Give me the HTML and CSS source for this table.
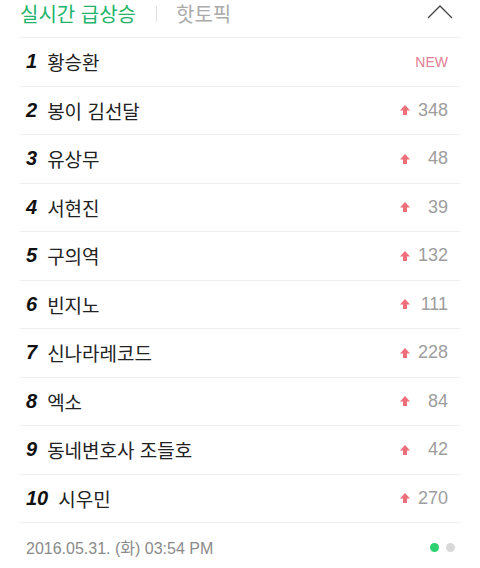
FILE: index.html
```html
<!DOCTYPE html>
<html lang="ko">
<head>
<meta charset="utf-8">
<link rel="stylesheet" href="styles.css">
</head>
<body>
<div class="panel">
  <div class="header">
    <span class="tab tab-on">실시간 급상승</span>
    <span class="sep"></span>
    <span class="tab tab-off">핫토픽</span>
    <svg class="chev" width="26" height="16" viewBox="0 0 26 16"><path d="M1 15 L13 3 L25 15" fill="none" stroke="#444" stroke-width="1.3"/></svg>
  </div>
  <ul class="list">
    <li class="row"><span class="rank">1</span><span class="name">황승환</span><span class="new">NEW</span></li>
    <li class="row"><span class="rank">2</span><span class="name">봉이 김선달</span><span class="up"><svg class="arrow" width="10" height="10" viewBox="0 0 10 10"><path d="M5 0 L10 5.5 L7 5.5 L7 10 L3 10 L3 5.5 L0 5.5 Z" fill="#ee6f7a"/></svg><span class="num">348</span></span></li>
    <li class="row"><span class="rank">3</span><span class="name">유상무</span><span class="up"><svg class="arrow" width="10" height="10" viewBox="0 0 10 10"><path d="M5 0 L10 5.5 L7 5.5 L7 10 L3 10 L3 5.5 L0 5.5 Z" fill="#ee6f7a"/></svg><span class="num">48</span></span></li>
    <li class="row"><span class="rank">4</span><span class="name">서현진</span><span class="up"><svg class="arrow" width="10" height="10" viewBox="0 0 10 10"><path d="M5 0 L10 5.5 L7 5.5 L7 10 L3 10 L3 5.5 L0 5.5 Z" fill="#ee6f7a"/></svg><span class="num">39</span></span></li>
    <li class="row"><span class="rank">5</span><span class="name">구의역</span><span class="up"><svg class="arrow" width="10" height="10" viewBox="0 0 10 10"><path d="M5 0 L10 5.5 L7 5.5 L7 10 L3 10 L3 5.5 L0 5.5 Z" fill="#ee6f7a"/></svg><span class="num">132</span></span></li>
    <li class="row"><span class="rank">6</span><span class="name">빈지노</span><span class="up"><svg class="arrow" width="10" height="10" viewBox="0 0 10 10"><path d="M5 0 L10 5.5 L7 5.5 L7 10 L3 10 L3 5.5 L0 5.5 Z" fill="#ee6f7a"/></svg><span class="num">111</span></span></li>
    <li class="row"><span class="rank">7</span><span class="name">신나라레코드</span><span class="up"><svg class="arrow" width="10" height="10" viewBox="0 0 10 10"><path d="M5 0 L10 5.5 L7 5.5 L7 10 L3 10 L3 5.5 L0 5.5 Z" fill="#ee6f7a"/></svg><span class="num">228</span></span></li>
    <li class="row"><span class="rank">8</span><span class="name">엑소</span><span class="up"><svg class="arrow" width="10" height="10" viewBox="0 0 10 10"><path d="M5 0 L10 5.5 L7 5.5 L7 10 L3 10 L3 5.5 L0 5.5 Z" fill="#ee6f7a"/></svg><span class="num">84</span></span></li>
    <li class="row"><span class="rank">9</span><span class="name">동네변호사 조들호</span><span class="up"><svg class="arrow" width="10" height="10" viewBox="0 0 10 10"><path d="M5 0 L10 5.5 L7 5.5 L7 10 L3 10 L3 5.5 L0 5.5 Z" fill="#ee6f7a"/></svg><span class="num">42</span></span></li>
    <li class="row"><span class="rank">10</span><span class="name">시우민</span><span class="up"><svg class="arrow" width="10" height="10" viewBox="0 0 10 10"><path d="M5 0 L10 5.5 L7 5.5 L7 10 L3 10 L3 5.5 L0 5.5 Z" fill="#ee6f7a"/></svg><span class="num">270</span></span></li>
  </ul>
  <div class="footer">
    <span class="date">2016.05.31. (화) 03:54 PM</span>
    <span class="dots"><span class="dot dot-on"></span><span class="dot"></span></span>
  </div>
</div>
</body>
</html>
```

FILE: styles.css
```css
html, body {
  margin: 0;
  padding: 0;
  background: #fff;
}
.panel {
  padding: 0 20px;
  font-family: "Noto Sans CJK KR", "Liberation Sans", sans-serif;
}
.header {
  height: 38px;
  box-sizing: border-box;
  padding-top: 1px;
  display: flex;
  align-items: flex-start;
  border-bottom: 1px solid #efefef;
}
.tab {
  font-size: 20px;
  line-height: 26px;
}
.tab-on {
  color: #22b46a;
}
.tab-off {
  color: #ababab;
}
.sep {
  width: 1px;
  height: 16px;
  margin: 5px 19px 0 20px;
  background: #e2e2e2;
}
.chev {
  margin-left: auto;
  margin-right: 7px;
  margin-top: 2px;
}
.list {
  list-style: none;
  margin: 0;
  padding: 0;
}
.row {
  height: 48.5px;
  box-sizing: border-box;
  border-bottom: 1px solid #efefef;
  display: flex;
  align-items: center;
  padding: 0 12px 0 6px;
}
.rank {
  font-family: "Liberation Sans", sans-serif;
  font-weight: bold;
  font-style: italic;
  font-size: 20px;
  color: #111;
  margin-right: 10px;
}
.name {
  font-size: 19px;
  color: #222;
}
.new {
  margin-left: auto;
  font-family: "Liberation Sans", sans-serif;
  font-size: 14px;
  color: #e28096;
}
.up {
  margin-left: auto;
  display: flex;
  align-items: center;
  font-family: "Liberation Sans", sans-serif;
  font-size: 18px;
  color: #9d9d9d;
}
.arrow {
  flex: none;
}
.num {
  width: 38px;
  text-align: right;
}
.footer {
  height: 44px;
  box-sizing: border-box;
  padding: 4px 5px 0 6px;
  display: flex;
  align-items: center;
}
.date {
  font-family: "Liberation Sans", "Noto Sans CJK KR", sans-serif;
  font-size: 16px;
  color: #8a8a8a;
}
.dots {
  margin-left: auto;
  display: flex;
  gap: 7px;
}
.dot {
  width: 9px;
  height: 9px;
  border-radius: 50%;
  background: #d9d9d9;
}
.dot-on {
  background: #2ed170;
}
```
